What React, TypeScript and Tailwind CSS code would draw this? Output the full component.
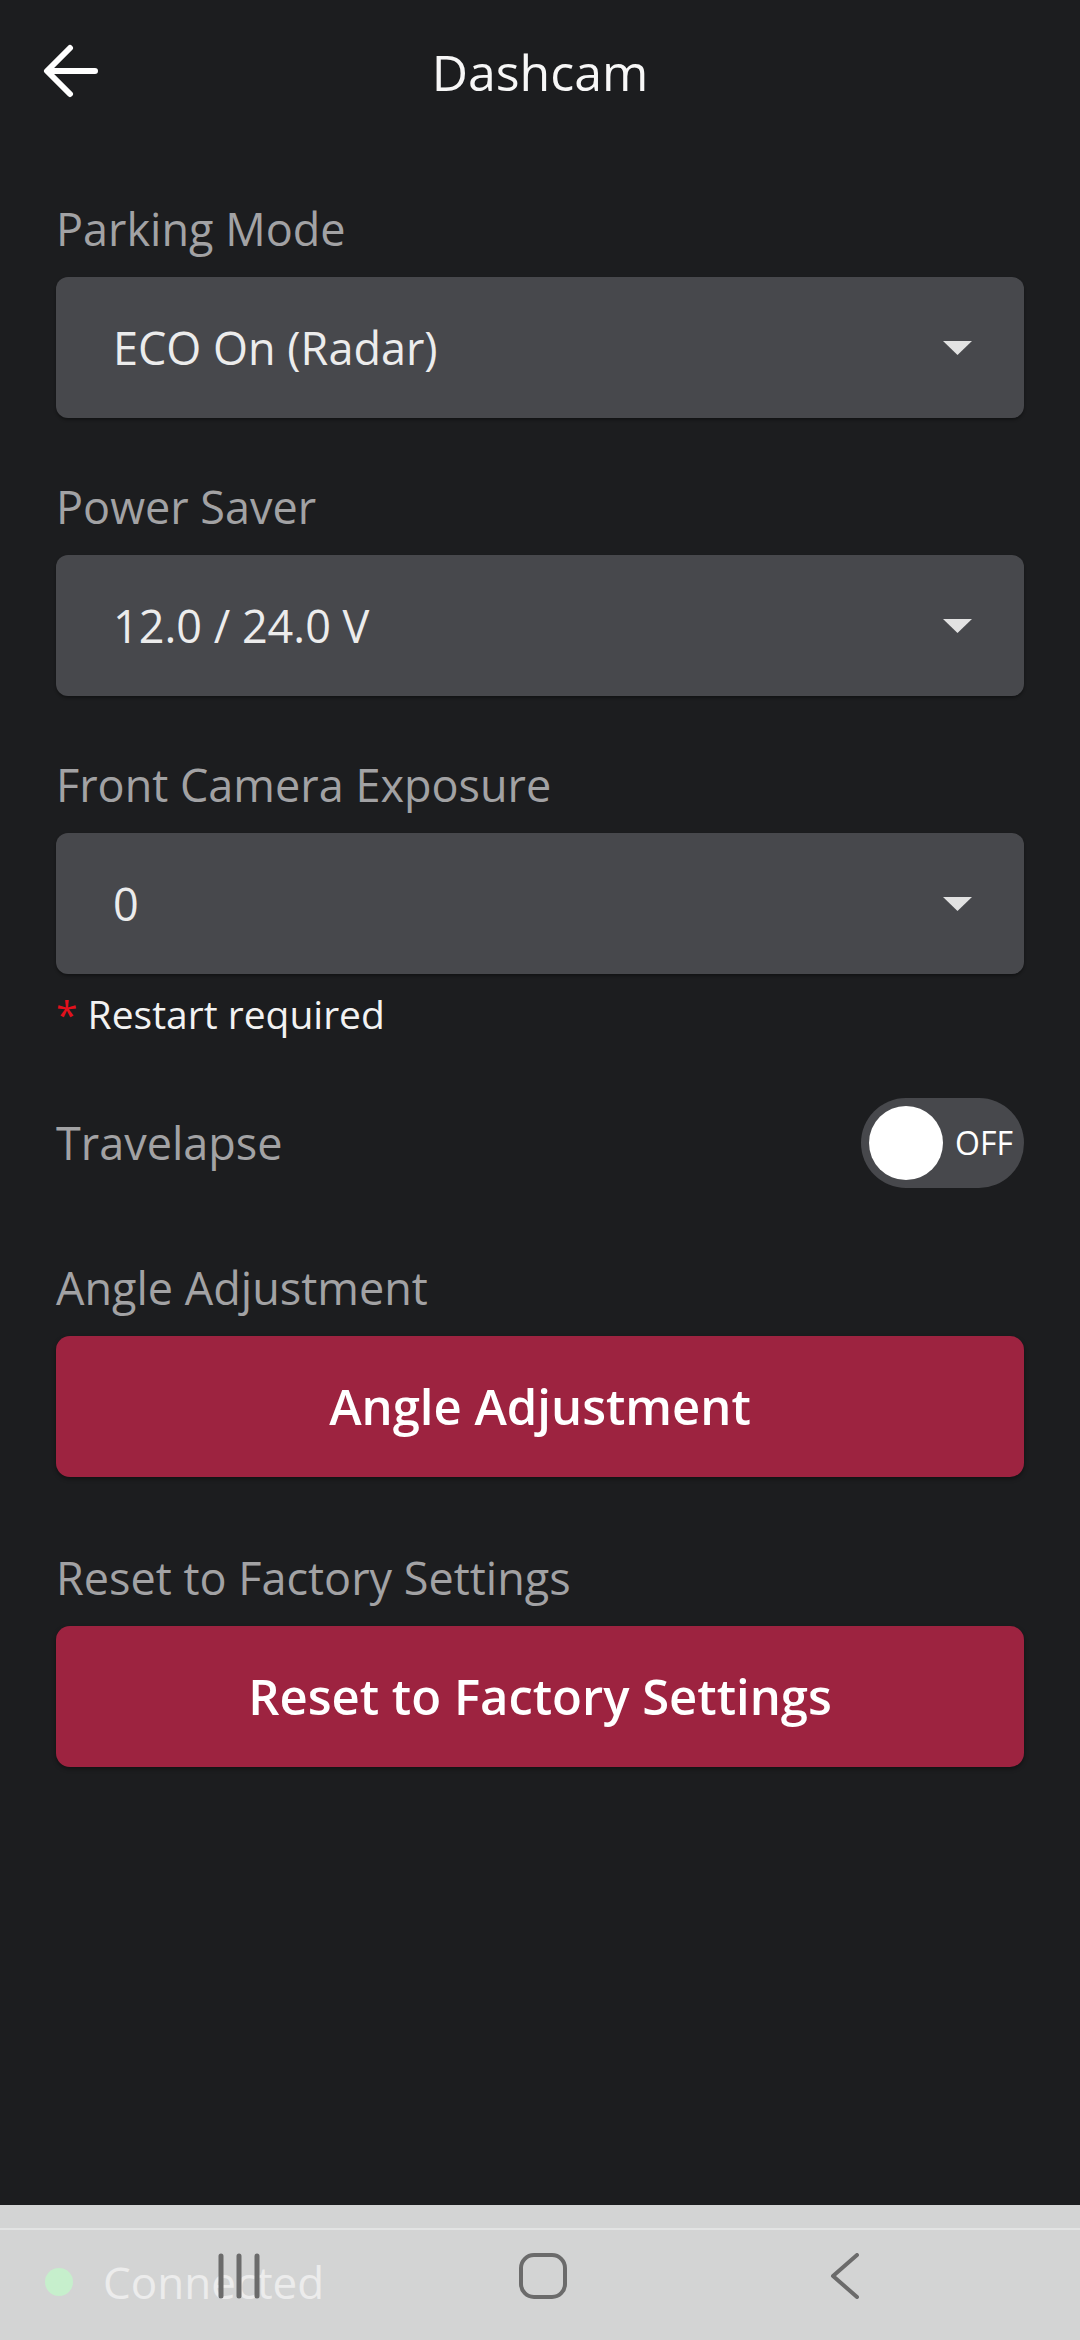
import { useState } from "react";

const font = { fontFamily: '"Open Sans", "Noto Sans", sans-serif' };

function Caret() {
  return (
    <svg width="29" height="14" viewBox="0 0 29 14" className="shrink-0">
      <path d="M0 0 H29 L14.5 14 Z" fill="#e2e2e2" />
    </svg>
  );
}

function Select({ label, value, children }: { label: string; value: string; children?: React.ReactNode }) {
  return (
    <div className="flex flex-col">
      <div className="text-[45px] leading-[60px] text-[#a2a2a4]">{label}</div>
      <div className="mt-[18px] h-[141px] rounded-[12px] bg-[#47484c] pl-[57px] pr-[52px] flex items-center justify-between shadow-[0_2px_3px_rgba(0,0,0,0.35)]">
        <span className="text-[45px] text-[#ececec]">{value}</span>
        <Caret />
      </div>
      {children}
    </div>
  );
}

function ActionButton({ label }: { label: string }) {
  return (
    <div className="flex flex-col">
      <div className="text-[45px] leading-[60px] text-[#a2a2a4]">{label}</div>
      <button className="mt-[18px] h-[141px] rounded-[14px] bg-[#9d2340] text-white text-[49px] font-semibold shadow-[0_2px_4px_rgba(0,0,0,0.4)]">
        {label}
      </button>
    </div>
  );
}

export default function App() {
  const [travelapse, setTravelapse] = useState(false);

  return (
    <div style={font} className="w-[1080px] h-[2340px] bg-[#1c1d1f] flex flex-col overflow-hidden">
      {/* header */}
      <div className="h-[144px] flex items-center relative shrink-0">
        <button className="absolute left-[43px] top-[43px] w-[56px] h-[56px] flex items-center justify-center">
          <svg width="56" height="56" viewBox="0 0 56 56" fill="none" stroke="#ffffff" strokeWidth="6" strokeLinecap="round" strokeLinejoin="round">
            <path d="M52 28 H5 M27 5 L4 28 L27 51" />
          </svg>
        </button>
        <div className="w-full text-center text-[50px] text-[#f7f7f7]">Dashcam</div>
      </div>

      {/* settings */}
      <div className="flex-1 px-[56px] pt-[55px] flex flex-col">
        <Select label="Parking Mode" value="ECO On (Radar)" />
        <div className="h-[59px]" />
        <Select label="Power Saver" value="12.0 / 24.0 V" />
        <div className="h-[59px]" />
        <Select label="Front Camera Exposure" value="0">
          <div className="mt-[14px] text-[39px] leading-[52px] text-[#f2f2f2]">
            <span className="text-[#e3101c]">*</span> Restart required
          </div>
        </Select>

        <div className="mt-[58px] flex items-center justify-between">
          <span className="text-[45px] text-[#a2a2a4]">Travelapse</span>
          <button
            onClick={() => setTravelapse(!travelapse)}
            className="w-[163px] h-[90px] rounded-full bg-[#47484c] flex items-center pl-[8px] pr-[10px] gap-[12px]"
          >
            <span className="w-[74px] h-[74px] rounded-full bg-white shrink-0" />
            <span className="text-[32px] text-white">{travelapse ? "ON" : "OFF"}</span>
          </button>
        </div>

        <div className="h-[70px]" />
        <ActionButton label="Angle Adjustment" />
        <div className="h-[71px]" />
        <ActionButton label="Reset to Factory Settings" />
      </div>

      {/* footer + system nav overlay */}
      <div className="h-[135px] bg-[#d3d4d4] relative shrink-0">
        <div className="h-[23px]" />
        <div className="h-[2px] bg-[#e2e3e3]" />
        <div className="flex items-center pl-[45px] pt-[22px] gap-[30px]">
          <span className="w-[28px] h-[28px] rounded-full bg-[#c6efcc]" />
          <span className="text-[44px] text-[#ececec] leading-[60px]">Connected</span>
        </div>
        <div className="absolute inset-x-0 top-[48px] h-[45px] flex items-center">
          <svg width="44" height="46" viewBox="0 0 44 46" className="absolute left-[217px]" fill="none" stroke="#6b6b6b" strokeWidth="5" strokeLinecap="round">
            <path d="M4 3 V43 M22 3 V43 M40 3 V43" />
          </svg>
          <svg width="48" height="46" viewBox="0 0 48 46" className="absolute left-[519px]" fill="none" stroke="#6b6b6b" strokeWidth="4">
            <rect x="2" y="2" width="44" height="42" rx="13" />
          </svg>
          <svg width="30" height="46" viewBox="0 0 30 46" className="absolute left-[830px]" fill="none" stroke="#6b6b6b" strokeWidth="4" strokeLinecap="round" strokeLinejoin="round">
            <path d="M27 2 L3 23 L27 44" />
          </svg>
        </div>
      </div>
    </div>
  );
}
